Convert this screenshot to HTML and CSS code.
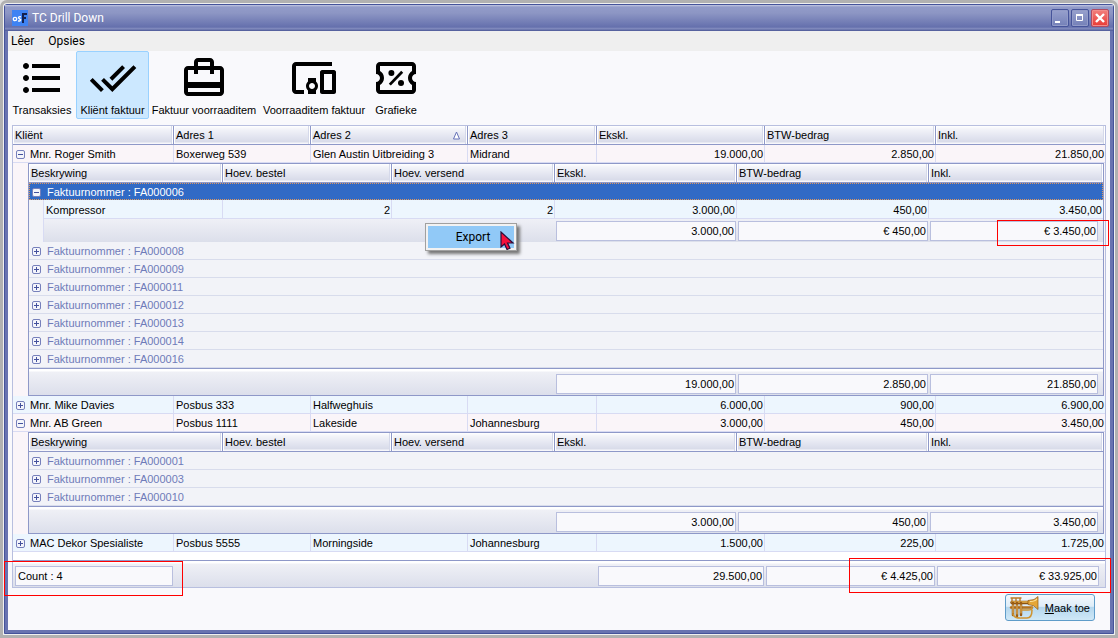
FILE: index.html
```html
<!DOCTYPE html>
<html lang="af">
<head>
<meta charset="utf-8">
<title>TC Drill Down</title>
<link rel="stylesheet" href="styles.css">
</head>
<body>
<div class="window">
  <header class="titlebar">
    <svg class="app-icon" width="16" height="16" viewBox="0 0 16 16"><rect width="16" height="16" fill="#3f83f3"/><circle cx="3" cy="9" r="1.7" fill="none" stroke="#fff" stroke-width="1.3"/><path d="M9 6.8Q6.6 6.3 6.5 7.7Q7 8.8 8.7 9.6Q8.6 11.5 6 10.8" fill="none" stroke="#fff" stroke-width="1.3"/><path d="M11 13V4h4M11 8h3" fill="none" stroke="#14214f" stroke-width="2"/></svg>
    <h1 class="title">TC Drill Down</h1>
    <div class="controls">
      <button class="control" aria-label="Minimize"><svg width="16" height="16"><path d="M3 12h5" stroke="#fff" stroke-width="2"/></svg></button>
      <button class="control" aria-label="Maximize"><svg width="16" height="16"><path d="M4.500 4.500h6v6h-6z" fill="none" stroke="#fff"/><path d="M4 5h7" stroke="#fff" stroke-width="2"/></svg></button>
      <button class="control control-close" aria-label="Close"><svg width="16" height="16"><path d="M4 4l8 8M12 4l-8 8" stroke="#fff" stroke-width="2.400"/></svg></button>
    </div>
  </header>
  <nav class="menubar"><button class="menu">Lêer</button><button class="menu">Opsies</button></nav>
  <main class="client">
    <div class="toolbar">
      <button class="tool"><svg class="tool-icon" viewBox="0 0 24 24"><path d="M4 10.500c-.83 0-1.500.67-1.500 1.500s.67 1.500 1.500 1.500 1.500-.67 1.500-1.500-.67-1.500-1.500-1.500zm0-6c-.83 0-1.500.67-1.500 1.500S3.170 7.500 4 7.500 5.500 6.830 5.500 6 4.830 4.500 4 4.500zm0 12c-.83 0-1.500.68-1.500 1.500s.68 1.500 1.500 1.500 1.500-.68 1.500-1.500-.67-1.500-1.500-1.500zM7 19h14v-2H7v2zm0-6h14v-2H7v2zm0-8v2h14V5H7z"/></svg><span>Transaksies</span></button>
      <button class="tool tool-active"><svg class="tool-icon" viewBox="0 0 24 24"><path d="M18 7l-1.410-1.410-6.340 6.340 1.410 1.410L18 7zm4.240-1.410L11.660 16.170 7.480 12l-1.410 1.410L11.660 19l12-12-1.420-1.410zM.41 13.410L6 19l1.410-1.410L1.830 12 .41 13.410z"/></svg><span>Kliënt faktuur</span></button>
      <button class="tool"><svg class="tool-icon" viewBox="0 0 24 24"><path d="M20 6h-3V4c0-1.110-.89-2-2-2H9c-1.110 0-2 .89-2 2v2H4c-1.110 0-2 .89-2 2v11c0 1.110.89 2 2 2h16c1.110 0 2-.89 2-2V8c0-1.110-.89-2-2-2zM9 4h6v2H9V4zm11 15H4v-2h16v2zm0-5H4V8h3v2h2V8h6v2h2V8h3v6z"/></svg><span>Faktuur voorraaditem</span></button>
      <button class="tool"><svg class="tool-icon" viewBox="0 0 24 24"><path d="M3 6h18V4H3c-1.100 0-2 .9-2 2v12c0 1.100.9 2 2 2h4v-2H3V6zm10 6H9v1.780c-.61.55-1 1.330-1 2.220s.39 1.670 1 2.220V20h4v-1.780c.61-.55 1-1.340 1-2.220s-.39-1.670-1-2.220V12zm-2 5.500c-.83 0-1.500-.67-1.500-1.500s.67-1.500 1.500-1.500 1.500.67 1.500 1.500-.67 1.500-1.500 1.500zM22 8h-6c-.5 0-1 .5-1 1v10c0 .5.5 1 1 1h6c.5 0 1-.5 1-1V9c0-.5-.5-1-1-1zm-1 10h-4v-8h4v8z"/></svg><span>Voorraaditem faktuur</span></button>
      <button class="tool"><svg class="tool-icon" viewBox="0 0 24 24"><path d="M22 10V6c0-1.110-.9-2-2-2H4c-1.100 0-1.990.89-1.990 2v4c1.100 0 1.990.9 1.990 2s-.89 2-2 2v4c0 1.100.9 2 2 2h16c1.100 0 2-.9 2-2v-4c-1.100 0-2-.9-2-2s.9-2 2-2zm-2-1.460c-1.190.69-2 1.990-2 3.460s.81 2.770 2 3.460V18H4v-2.540c1.190-.69 2-1.990 2-3.460 0-1.480-.8-2.770-1.990-3.460L4 6h16v2.540z"/><circle cx="9.700" cy="9.500" r="1.500"/><circle cx="14.500" cy="14.500" r="1.500"/><path d="M8.900 15.300l6.200-6.400" stroke="#000" stroke-width="1.400"/></svg><span>Grafieke</span></button>
    </div>

    <table class="grid">
      <colgroup><col class="c-client"><col class="c-adr1"><col class="c-adr2"><col class="c-adr3"><col class="c-excl"><col class="c-vat"><col></colgroup>
      <thead><tr><th>Kliënt</th><th>Adres 1</th><th><span class="sorted">Adres 2<svg width="9" height="9" viewBox="0 0 9 9"><path d="M4.500 1L1.500 8h6z" fill="#fff" stroke="#6672b8"/></svg></span></th><th>Adres 3</th><th>Ekskl.</th><th>BTW-bedrag</th><th>Inkl.</th></tr></thead>
      <tbody>
        <tr class="odd"><td><button class="toggle open" aria-label="Collapse"></button>Mnr. Roger Smith</td><td>Boxerweg 539</td><td>Glen Austin Uitbreiding 3</td><td>Midrand</td><td class="num">19.000,00</td><td class="num">2.850,00</td><td class="num">21.850,00</td></tr>
        <tr class="nest"><td colspan="7">
          <table class="detail">
            <colgroup><col class="d-gutter"><col class="d-desc"><col class="d-order"><col class="d-sent"><col class="d-excl"><col class="d-vat"><col></colgroup>
            <thead><tr><th colspan="2">Beskrywing</th><th>Hoev. bestel</th><th>Hoev. versend</th><th>Ekskl.</th><th>BTW-bedrag</th><th>Inkl.</th></tr></thead>
            <tbody>
              <tr class="selected"><td colspan="7"><button class="toggle open" aria-label="Collapse"></button>Faktuurnommer : FA000006</td></tr>
              <tr class="item"><td class="gutter"></td><td>Kompressor</td><td class="num">2</td><td class="num">2</td><td class="num">3.000,00</td><td class="num">450,00</td><td class="num">3.450,00</td></tr>
              <tr class="sub"><td class="gutter"></td><td colspan="3"></td><td><div class="sum">3.000,00</div></td><td><div class="sum">€ 450,00</div></td><td><div class="sum sum-last">€ 3.450,00</div></td></tr>
              <tr class="group"><td colspan="7"><button class="toggle" aria-label="Expand"></button>Faktuurnommer : FA000008</td></tr>
              <tr class="group"><td colspan="7"><button class="toggle" aria-label="Expand"></button>Faktuurnommer : FA000009</td></tr>
              <tr class="group"><td colspan="7"><button class="toggle" aria-label="Expand"></button>Faktuurnommer : FA000011</td></tr>
              <tr class="group"><td colspan="7"><button class="toggle" aria-label="Expand"></button>Faktuurnommer : FA000012</td></tr>
              <tr class="group"><td colspan="7"><button class="toggle" aria-label="Expand"></button>Faktuurnommer : FA000013</td></tr>
              <tr class="group"><td colspan="7"><button class="toggle" aria-label="Expand"></button>Faktuurnommer : FA000014</td></tr>
              <tr class="group"><td colspan="7"><button class="toggle" aria-label="Expand"></button>Faktuurnommer : FA000016</td></tr>
            </tbody>
            <tfoot><tr><td colspan="4"></td><td><div class="sum">19.000,00</div></td><td><div class="sum">2.850,00</div></td><td><div class="sum sum-last">21.850,00</div></td></tr></tfoot>
          </table>
        </td></tr>
        <tr class="even"><td><button class="toggle" aria-label="Expand"></button>Mnr. Mike Davies</td><td>Posbus 333</td><td>Halfweghuis</td><td></td><td class="num">6.000,00</td><td class="num">900,00</td><td class="num">6.900,00</td></tr>
        <tr class="odd"><td><button class="toggle open" aria-label="Collapse"></button>Mnr. AB Green</td><td>Posbus 1111</td><td>Lakeside</td><td>Johannesburg</td><td class="num">3.000,00</td><td class="num">450,00</td><td class="num">3.450,00</td></tr>
        <tr class="nest"><td colspan="7">
          <table class="detail">
            <colgroup><col class="d-gutter"><col class="d-desc"><col class="d-order"><col class="d-sent"><col class="d-excl"><col class="d-vat"><col></colgroup>
            <thead><tr><th colspan="2">Beskrywing</th><th>Hoev. bestel</th><th>Hoev. versend</th><th>Ekskl.</th><th>BTW-bedrag</th><th>Inkl.</th></tr></thead>
            <tbody>
              <tr class="group"><td colspan="7"><button class="toggle" aria-label="Expand"></button>Faktuurnommer : FA000001</td></tr>
              <tr class="group"><td colspan="7"><button class="toggle" aria-label="Expand"></button>Faktuurnommer : FA000003</td></tr>
              <tr class="group"><td colspan="7"><button class="toggle" aria-label="Expand"></button>Faktuurnommer : FA000010</td></tr>
            </tbody>
            <tfoot><tr><td colspan="4"></td><td><div class="sum">3.000,00</div></td><td><div class="sum">450,00</div></td><td><div class="sum sum-last">3.450,00</div></td></tr></tfoot>
          </table>
        </td></tr>
        <tr class="even"><td><button class="toggle" aria-label="Expand"></button>MAC Dekor Spesialiste</td><td>Posbus 5555</td><td>Morningside</td><td>Johannesburg</td><td class="num">1.500,00</td><td class="num">225,00</td><td class="num">1.725,00</td></tr>
        <tr class="spacer"><td colspan="7"></td></tr>
      </tbody>
      <tfoot class="totals"><tr><td><div class="sum count">Count : 4</div></td><td colspan="3"></td><td><div class="sum">29.500,00</div></td><td><div class="sum">€ 4.425,00</div></td><td><div class="sum sum-last">€ 33.925,00</div></td></tr></tfoot>
    </table>

    <div class="actions">
      <button class="close-button">
        <svg width="34" height="24" viewBox="0 0 34 24"><g fill="none" stroke-linecap="round"><path d="M4 6.500H26" stroke="#8b5312" stroke-width="3.500"/><path d="M4 6H26" stroke="#e9b24c" stroke-width="1.500"/><path d="M3 11.500H24" stroke="#b4711c" stroke-width="2.500"/><path d="M5 7v12M9 7v13M13 7v12" stroke="#9a5b14" stroke-width="2.500"/><path d="M4 2v3M8 2v3M12 2v3M3 2h10" stroke="#b97a28" stroke-width="1.400"/><path d="M5 9v8M9 9v9M13 9v8" stroke="#f0c46c" stroke-width="1"/><path d="M14 14h6q4 0 4-2.500M13 22h6q5 0 5-8M12 22q-6 0-7-4" stroke="#cf9430" stroke-width="1.500"/></g><path d="M20 4.500q7 0 10-4v13q-4-5-10-5z" fill="#e5a637" stroke="#8f560f" stroke-width=".7"/><path d="M22 5.500q5 0 7-2.500" stroke="#fbe3a0" fill="none" stroke-width="1.200"/></svg>
        <span><u>M</u>aak toe</span>
      </button>
    </div>
  </main>

  <div class="mark mark-sub"></div>
  <div class="mark mark-count"></div>
  <div class="mark mark-total"></div>
  <div class="popup" role="menu"><button class="popup-item" role="menuitem">Export</button></div>
  <svg class="pointer" width="15" height="19" viewBox="0 0 15 19"><path d="M1 1v15l3.500-3 2.500 5.500 3-1.300-2.500-5.200H13z" fill="#f5103c" stroke="#2a0d38" stroke-width="1.200"/></svg>
</div>
</body>
</html>
```
FILE: styles.css
```css
* { box-sizing: border-box; }
body {
  margin: 0;
  padding: 4px;
  background: #e4e4e4;
  font: 11px/14px "Liberation Sans", Arial, sans-serif;
  color: #000;
}
button { font: inherit; color: inherit; margin: 0; padding: 0; border: 0; background: none; }

.window {
  position: relative;
  display: flex;
  flex-direction: column;
  min-height: calc(100vh - 8px);
  border: 1px solid #45539a;
  border-radius: 3px 3px 0 0;
  background: #6873b0;
  box-shadow: 0 0 0 1px #f0f0f0, 0 0 0 4px #b1b1b1;
}

/* title bar */
.titlebar {
  display: flex;
  align-items: center;
  height: 26px;
  padding: 0 4px 0 7px;
  background: linear-gradient(#c3c8e2 0, #929bc9 2px, #8d96c4 8px, #6570ad 22px, #8790c0 24px, #56629f 25px);
}
.title {
  flex: 1;
  margin: 0 0 0 4px;
  font: 12px/16px Roboto, "Open Sans", sans-serif;
  color: #fff;
}
.controls { display: flex; gap: 2px; }
.control {
  width: 18px;
  height: 18px;
  border: 1px solid #46549a;
  border-radius: 2px;
  background: linear-gradient(#98a1cd, #7480b8);
  box-shadow: inset 0 0 0 1px #929bc8;
}
.control svg { display: block; }
.control-close {
  border-color: #b04a62;
  background: linear-gradient(#f2807e, #e93a35);
  box-shadow: inset 0 0 0 1px #f18d8b;
}

/* menu bar */
.menubar {
  display: flex;
  gap: 14px;
  height: 20px;
  margin: 0 3px;
  padding: 0 3px;
  background: #efefef;
}
.menu { font: 12px/20px Roboto, "Open Sans", sans-serif; }

.client {
  flex: 1;
  margin: 0 3px 3px;
  background: #f9f9fc;
}

/* toolbar */
.toolbar {
  display: grid;
  grid-template-columns: 68px 73px 110px 110px 54px;
  height: 74px;
  align-items: start;
}
.tool {
  display: flex;
  flex-direction: column;
  align-items: center;
  gap: 1px;
  height: 68px;
  padding-top: 2px;
  border: 1px solid transparent;
  border-radius: 2px;
  white-space: nowrap;
}
.tool-active { border-color: #99d1ff; background: #cce8ff; }
.tool-icon { flex: none; width: 48px; height: 48px; }

/* tables */
table { border-collapse: separate; border-spacing: 0; table-layout: fixed; }
th, td {
  height: 18px;
  padding: 0 2px;
  overflow: hidden;
  text-align: left;
  font-weight: normal;
  white-space: nowrap;
}
th {
  border-right: 1px solid #8e98c8;
  border-bottom: 1px solid #8e98c8;
  background: linear-gradient(#fff 0, #f3f4f9 3px, #e4e6f1 10px, #d8dbe9 16px, #f7f7fb 17px);
  background-clip: padding-box;
  box-shadow: inset -1px 0 #fff, inset 1px 0 #fff, inset -2px 0 #d5d9ea;
}
.sorted { display: flex; align-items: center; justify-content: space-between; padding-right: 4px; }
.grid {
  width: calc(100% - 8px);
  margin: 0 4px;
  border: 1px solid #b8bfdf;
  background: #fff;
}
.grid > thead th { height: 19px; }
.c-client { width: 161px; }
.c-adr1 { width: 137px; }
.c-adr2 { width: 157px; }
.c-adr3 { width: 129px; }
.c-excl { width: 168px; }
.c-vat { width: 171px; }
.odd td, .even td, .item td { border-right: 1px solid #d8dbf3; border-bottom: 1px solid #d8dbf3; }
.odd td { background: #faf5f9; }
.even td, .item td { background: #edf6fe; }
td.num { padding: 0 1px; text-align: right; }
.odd td:last-child, .even td:last-child, .item td:last-child, th:last-child { border-right: 0; }
.spacer td { height: 8px; }

.toggle {
  width: 9px;
  height: 9px;
  margin: 0 5px 0 1px;
  border: 1px solid #7680bb;
  border-radius: 2px;
  vertical-align: 0;
  background:
    linear-gradient(#44519d, #44519d) center / 5px 1px no-repeat,
    linear-gradient(#44519d, #44519d) center / 1px 5px no-repeat,
    #f4f5fb;
}
.toggle.open { background: linear-gradient(#44519d, #44519d) center / 5px 1px no-repeat, #f4f5fb; }

/* nested level */
.nest > td { height: auto; padding: 0 1px 0 15px; background: #faf5f9; }
.detail {
  width: 100%;
  border: 1px solid #8e98c8;
  background: #f2f3f8;
}
.detail th { height: 19px; }
.d-gutter { width: 15px; }
.d-desc { width: 179px; }
.d-order { width: 169px; }
.d-sent { width: 163px; }
.d-excl { width: 182px; }
.d-vat { width: 192px; }
.group td { border-bottom: 1px solid #d8dcec; color: #6f7bb9; }
.selected td { height: 17px; background: #316ac5; color: #fff; outline: 1px dotted #dd9860; outline-offset: -1px; }
.item td, .item td.num { height: 19px; padding-top: 2px; }
.item td.gutter, .sub td.gutter { border-right: 1px solid #d8dbf3; border-bottom: 0; background: #f2f3f8; }
.sub td {
  height: 23px;
  padding: 0 1px;
  background: linear-gradient(#eff0f6, #dcdfeb);
}
.detail .toggle { margin-right: 6px; }
.sum {
  height: 20px;
  padding: 0 1px;
  border: 1px solid #b9bfde;
  background: #f9f9fc;
  line-height: 18px;
  text-align: right;
}
.sum-last { margin-right: 4px; }
.totals .sum-last { margin-right: 5px; }
.count { margin-left: 1px; padding: 0 2px; text-align: left; }
tfoot td {
  height: 27px;
  padding: 3px 1px 0;
  border-top: 1px solid #8e98c8;
  background: linear-gradient(#fff 0, #fff 2px, #eff0f6 3px, #dcdfeb);
}

/* bottom actions */
.actions { display: flex; justify-content: flex-end; padding: 6px 15px 8px; }
.close-button {
  display: flex;
  align-items: center;
  gap: 3px;
  height: 27px;
  padding: 0 4px 0 2px;
  border: 1px solid #5f9cc9;
  border-radius: 3px;
  background: linear-gradient(#f3f8fc 0, #deedf8 45%, #b5d7ee 50%, #cfe8f7);
}

/* overlays */
.mark { position: absolute; border: 1px solid #f00; pointer-events: none; }
.mark-sub { top: 215px; right: 4px; width: 112px; height: 26px; }
.mark-count { top: 556px; left: -1px; width: 179px; height: 35px; }
.mark-total { top: 553px; right: 2px; width: 262px; height: 35px; }
.popup {
  position: absolute;
  top: 218px;
  left: 420px;
  width: 92px;
  padding: 2px;
  border: 1px solid #a0a0a0;
  background: #f2f2f2;
  box-shadow: 3px 3px 3px #777;
}
.popup-item {
  width: 100%;
  height: 22px;
  padding-left: 4px;
  background: #91c9f7;
  font: 12px/22px Roboto, "Open Sans", sans-serif;
}
.pointer { position: absolute; top: 226px; left: 495px; }
```
